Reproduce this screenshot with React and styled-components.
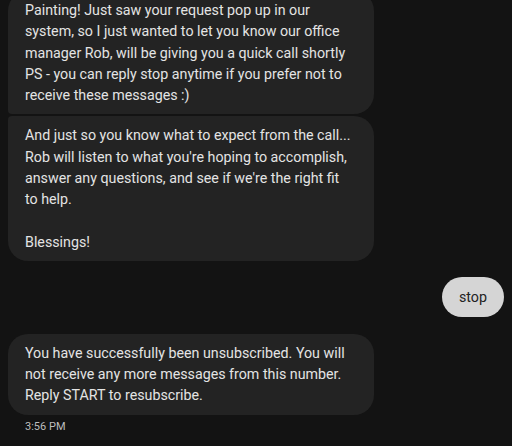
import React from "react";
import styled, { createGlobalStyle } from "styled-components";

const Global = createGlobalStyle`
  html, body { margin: 0; padding: 0; background: #131313; }
  body { width: 512px; height: 446px; overflow: hidden; font-family: Roboto, "Noto Sans", "Liberation Sans", sans-serif; }
`;

const Thread = styled.div`
  display: flex;
  flex-direction: column;
  padding: 0 8px;
  margin-top: -9px;
`;

const Bubble = styled.div`
  align-self: flex-start;
  box-sizing: border-box;
  width: 366px;
  background: #232323;
  color: #e4e4e4;
  font-size: 14.25px;
  line-height: 21.25px;
  padding: 9px 17px 8px;
  white-space: nowrap;
  border-radius: ${(p) =>
    p.$pos === "first" ? "20px 20px 20px 4px" : p.$pos === "last" ? "4px 20px 20px 20px" : "20px"};
  margin-top: ${(p) => p.$gap || 0}px;
`;

const Sent = styled.div`
  align-self: flex-end;
  box-sizing: border-box;
  height: 40px;
  width: 62px;
  margin-top: ${(p) => p.$gap || 0}px;
  border-radius: 20px;
  background: #d5d5d5;
  color: #222;
  font-size: 14.25px;
  display: flex;
  align-items: center;
  justify-content: center;
`;

const Time = styled.div`
  padding-left: 17px;
  margin-top: 5px;
  font-size: 11px;
  line-height: 13px;
  color: #bdbdbd;
`;

export default function App() {
  return (
    <>
      <Global />
      <Thread>
        <Bubble $pos="first">
          Painting! Just saw your request pop up in our<br />
          system, so I just wanted to let you know our office<br />
          manager Rob, will be giving you a quick call shortly<br />
          PS - you can reply stop anytime if you prefer not to<br />
          receive these messages :)
        </Bubble>
        <Bubble $pos="last" $gap={2}>
          And just so you know what to expect from the call...<br />
          Rob will listen to what you're hoping to accomplish,<br />
          answer any questions, and see if we're the right fit<br />
          to help.<br />
          <br />
          Blessings!
        </Bubble>
        <Sent $gap={16}>stop</Sent>
        <Bubble $gap={17}>
          You have successfully been unsubscribed. You will<br />
          not receive any more messages from this number.<br />
          Reply START to resubscribe.
        </Bubble>
        <Time>3:56 PM</Time>
      </Thread>
    </>
  );
}
